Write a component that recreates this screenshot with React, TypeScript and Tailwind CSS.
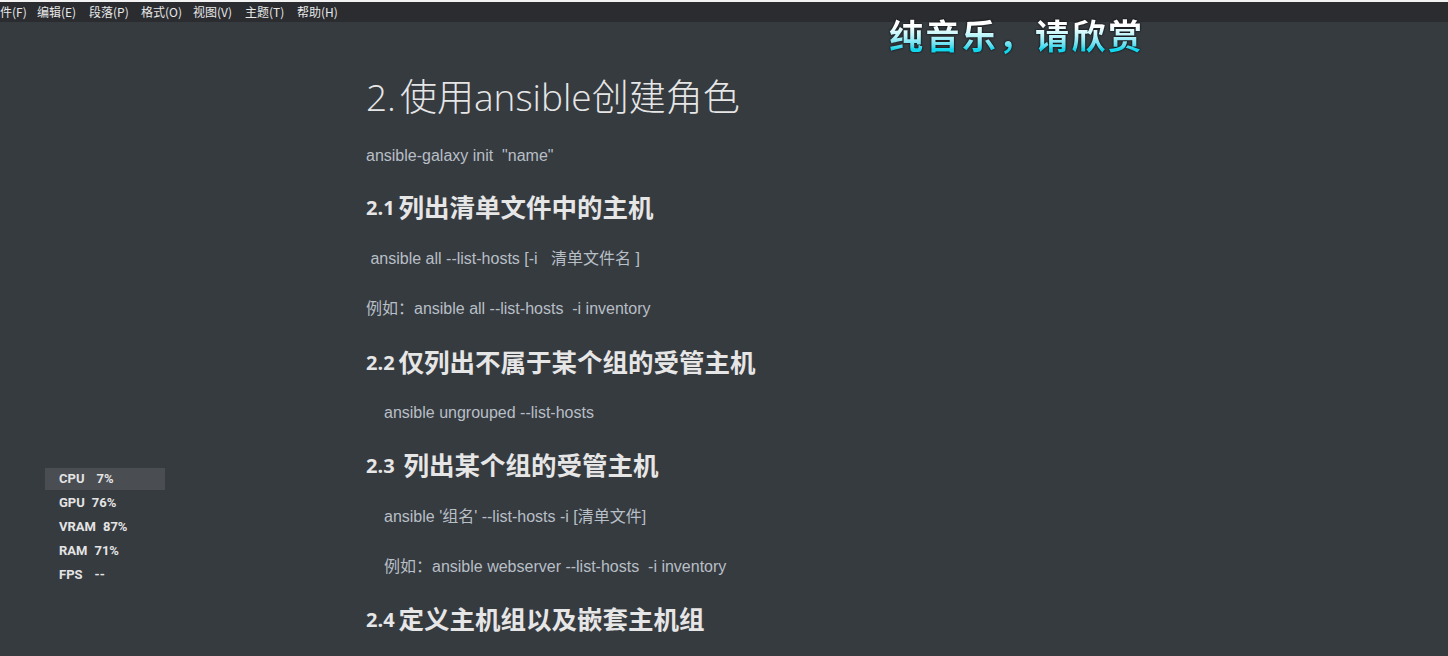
export default function App() {
  const menus = ["件(F)", "编辑(E)", "段落(P)", "格式(O)", "视图(V)", "主题(T)", "帮助(H)"];
  const stats = [
    { k: "CPU", v: "7%", on: true, pad: "pl-[12px]" },
    { k: "GPU", v: "76%", pad: "pl-[7px]" },
    { k: "VRAM", v: "87%", pad: "pl-[7px]" },
    { k: "RAM", v: "71%", pad: "pl-[7px]" },
    { k: "FPS", v: "--", pad: "pl-[12px]" },
  ];

  const body = "h-[24px] font-['Liberation_Sans','Noto_Sans_CJK_SC',sans-serif] text-[16px] leading-[24px] text-[#b8bfc6] whitespace-pre";
  const h2 = "h-[32px] overflow-visible font-['Noto_Sans_CJK_SC',sans-serif] font-bold text-[25.5px] leading-[32px] text-[#e6e6e6] whitespace-pre flex items-center";
  const num = "font-['Open_Sans',sans-serif] font-bold text-[20px] leading-[32px] mr-[4px] pt-[4px]";

  return (
    <div className="relative w-[1448px] h-[656px] overflow-hidden bg-[#363b40]">
      {/* menu bar */}
      <div className="h-[22px] border-t-2 border-[#f2f2f2] bg-[#2a2c30] flex items-center font-['Noto_Sans_CJK_SC',sans-serif] text-[12px] text-[#e8e8e8]">
        {menus.map((m, i) => (
          <span key={m} className={i === 0 ? "w-[37px]" : "w-[52px]"}>
            {m}
          </span>
        ))}
      </div>

      {/* document */}
      <div className="pl-[366px] flex flex-col">
        <h1 className="mt-[51px] h-[48px] font-['Open_Sans','Noto_Sans_CJK_SC',sans-serif] font-light text-[37px] leading-[48px] text-[#e6e6e6] whitespace-pre">
          2.<span className="ml-[4px]">使用ansible创建角色</span>
        </h1>
        <p className={`mt-[23px] ${body}`}>ansible-galaxy init  "name"</p>
        <h2 className={`mt-[22px] ${h2}`}>
          <span className={num}>2.1</span>
          <span>列出清单文件中的主机</span>
        </h2>
        <p className={`mt-[25px] ${body}`}> ansible all --list-hosts [-i   清单文件名 ]</p>
        <p className={`mt-[26px] ${body}`}>例如：ansible all --list-hosts  -i inventory</p>
        <h2 className={`mt-[24px] ${h2}`}>
          <span className={num}>2.2</span>
          <span>仅列出不属于某个组的受管主机</span>
        </h2>
        <p className={`mt-[24px] pl-[18px] ${body}`}>ansible ungrouped --list-hosts</p>
        <h2 className={`mt-[23px] ${h2}`}>
          <span className={`${num} mr-[9px]`}>2.3</span>
          <span>列出某个组的受管主机</span>
        </h2>
        <p className={`mt-[25px] pl-[18px] ${body}`}>ansible '组名' --list-hosts -i [清单文件]</p>
        <p className={`mt-[26px] pl-[18px] ${body}`}>例如：ansible webserver --list-hosts  -i inventory</p>
        <h2 className={`mt-[23px] ${h2}`}>
          <span className={num}>2.4</span>
          <span>定义主机组以及嵌套主机组</span>
        </h2>
      </div>

      {/* lyric overlay */}
      <div className="absolute left-[889px] top-[12px] font-['Noto_Sans_CJK_SC',sans-serif] font-bold text-[34px] leading-[46px] tracking-[2.5px] bg-gradient-to-b from-[#ffffff] from-[30%] via-[#bff6fb] to-[#12d6ec] to-[80%] bg-clip-text text-transparent drop-shadow-[0_0_1px_#000]">
        纯音乐，请欣赏
      </div>

      {/* perf overlay */}
      <div className="absolute left-[45px] top-[468px] w-[120px] flex flex-col font-['Roboto',sans-serif] font-bold text-[13px] text-[#e4e4e4]">
        {stats.map((s) => (
          <div key={s.k} className={`h-[22px] mb-[2px] flex items-center pl-[14px] ${s.on ? "bg-[#4a4d52]" : ""}`}>
            <span>{s.k}</span>
            <span className={s.pad}>{s.v}</span>
          </div>
        ))}
      </div>
    </div>
  );
}
